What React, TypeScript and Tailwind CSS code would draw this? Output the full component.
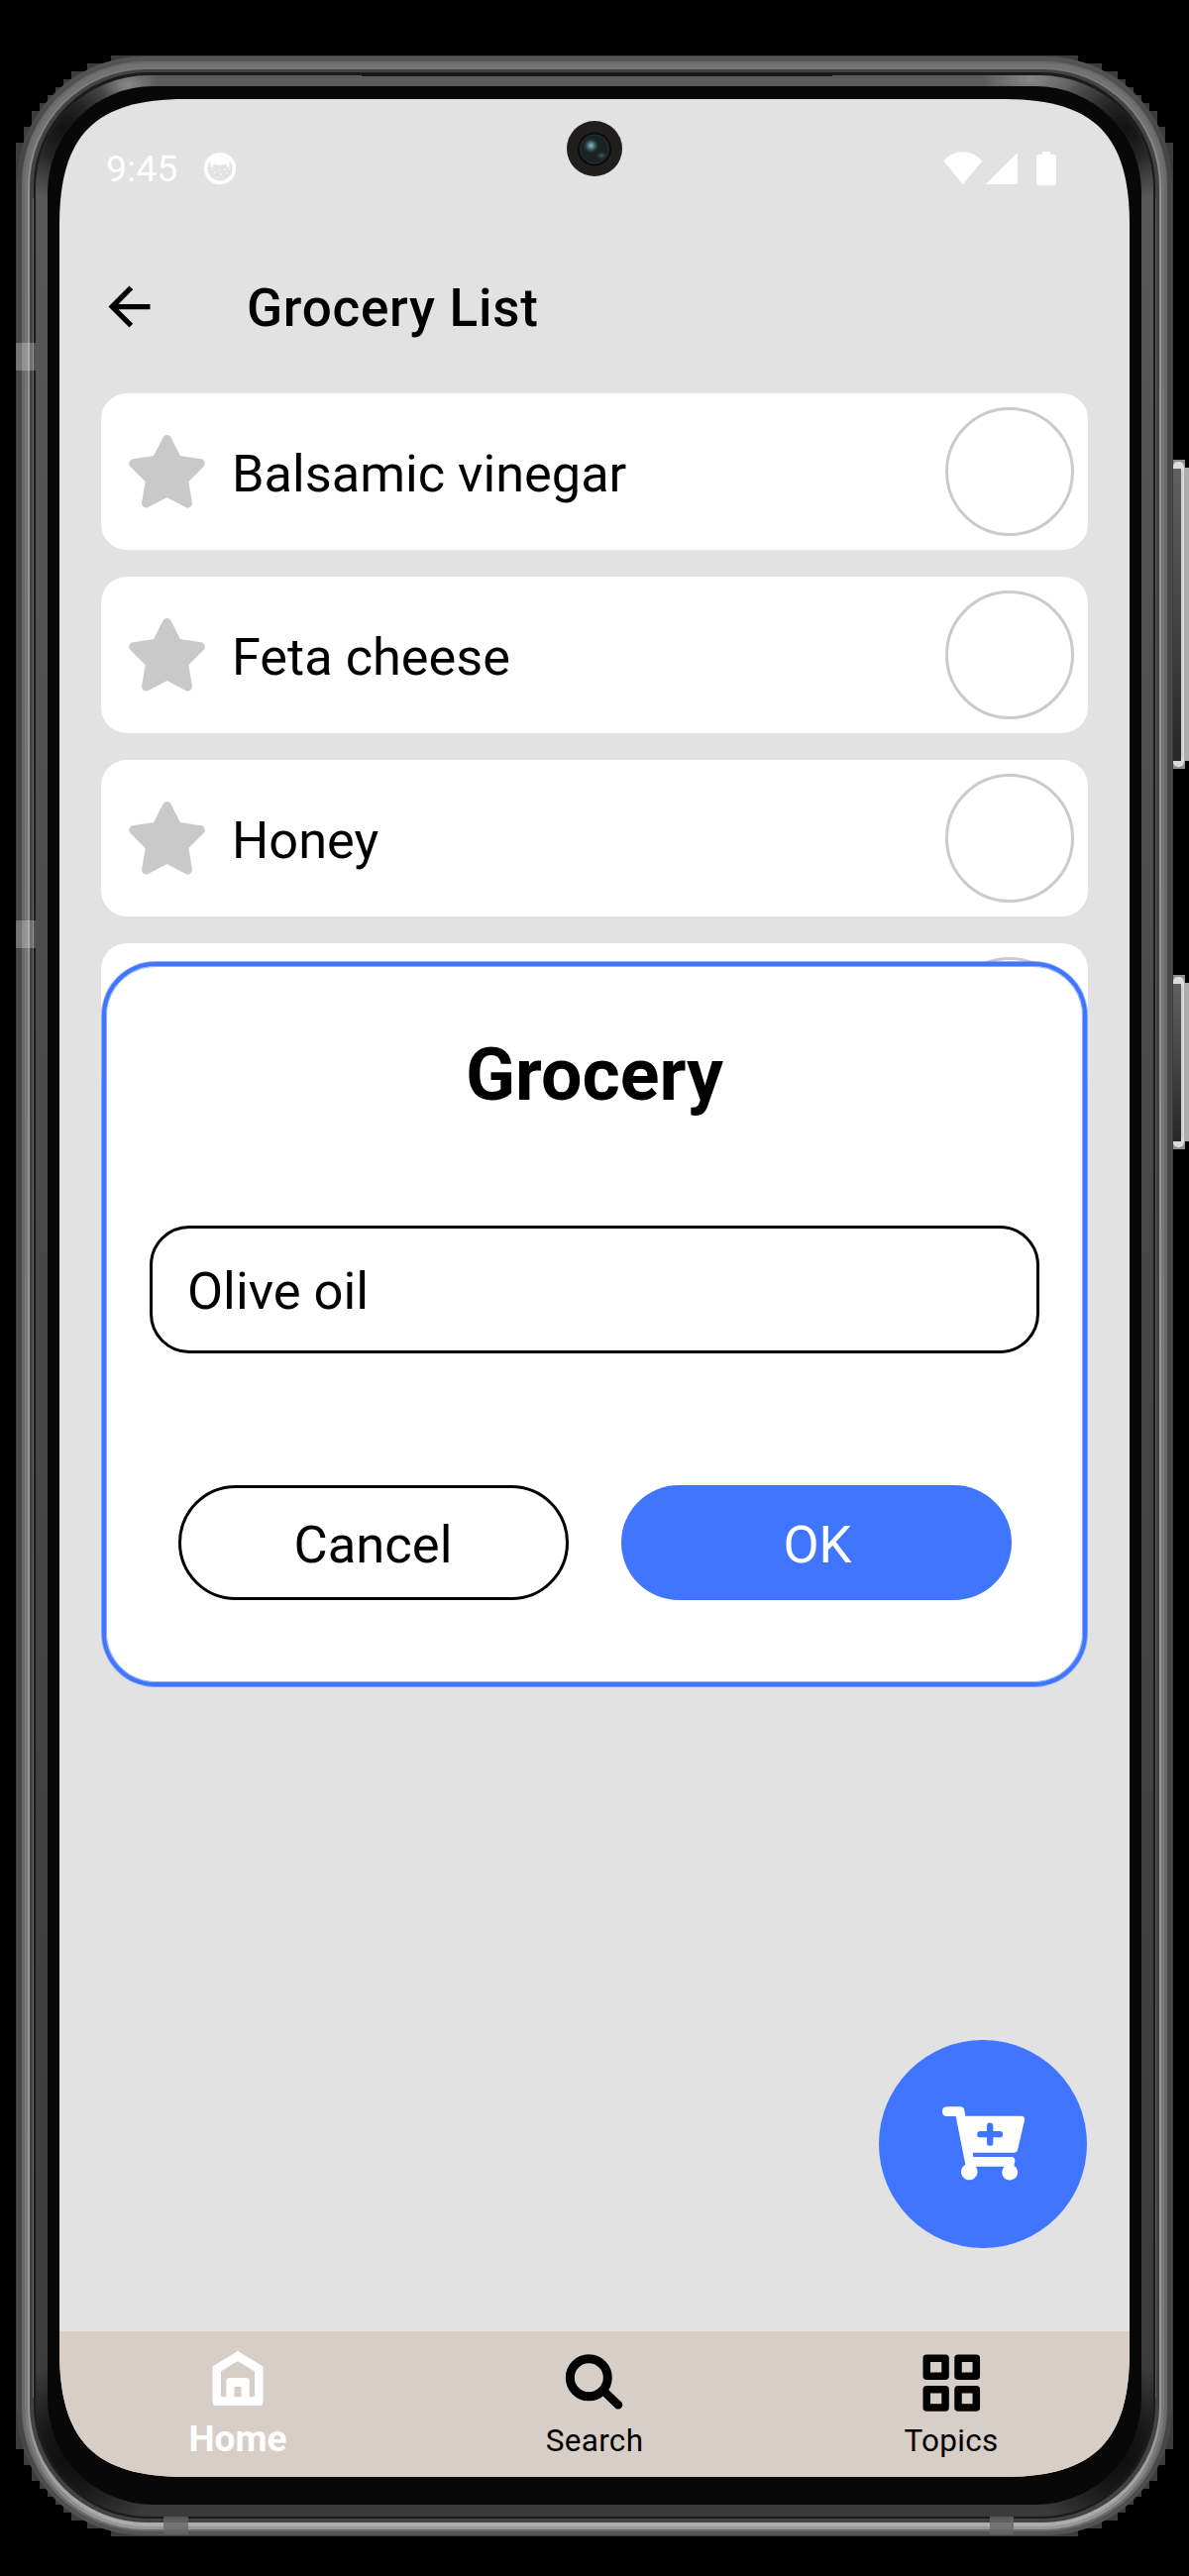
import React from "react";
import { MdArrowBack } from "react-icons/md";

const groceries = ["Balsamic vinegar", "Feta cheese", "Honey", "Lemon"];

type Ring = { x: number; top: number; bottom: number; r: number; fill: string };

const outerRings: Ring[] = [
  { x: 17, top: 57, bottom: 2559, r: 128, fill: "url(#rim)" },
  { x: 22, top: 62, bottom: 2555, r: 124, fill: "#6a6a6a" },
  { x: 25, top: 64, bottom: 2553, r: 122, fill: "url(#shine)" },
  { x: 28, top: 68, bottom: 2550, r: 120, fill: "url(#shineHot)" },
  { x: 30, top: 70, bottom: 2546, r: 118, fill: "#424242" },
  { x: 34, top: 73, bottom: 2542, r: 115, fill: "#1b1b1b" },
];

function RingRect({ x, top, bottom, r, fill }: Ring) {
  return <rect x={x} y={top} width={1200 - 2 * x} height={bottom - top} rx={r} fill={fill} />;
}

function SideButton({ y, h }: { y: number; h: number }) {
  return (
    <g>
      <rect x="1184" y={y} width="12" height={h} fill="#8f8f8f" />
      <rect x="1195" y={y + 8} width="5" height={h - 16} fill="#adadad" />
      <rect x="1184" y={y + 2} width="11" height={h - 4} rx="5" fill="#dcdcdc" />
      <rect x="1184" y={y + 9} width="8" height={h - 17} fill="url(#button)" />
      <rect x="1192" y={y + 12} width="2" height={h - 24} fill="#cfcfcf" />
    </g>
  );
}

function DeviceFrame() {
  return (
    <svg className="absolute inset-0" width="1200" height="2600" viewBox="0 0 1200 2600" aria-hidden="true">
      <defs>
        <linearGradient id="rim" x1="0" y1="0" x2="0" y2="1">
          <stop offset="0" stopColor="#555" />
          <stop offset="0.04" stopColor="#464646" />
          <stop offset="0.96" stopColor="#464646" />
          <stop offset="1" stopColor="#545454" />
        </linearGradient>
        <linearGradient id="shine" x1="0" y1="0" x2="0" y2="1">
          <stop offset="0" stopColor="#727272" />
          <stop offset="0.97" stopColor="#7a7a7a" />
          <stop offset="1" stopColor="#999" />
        </linearGradient>
        <linearGradient id="shineHot" x1="0" y1="0" x2="0" y2="1">
          <stop offset="0" stopColor="#777" />
          <stop offset="0.05" stopColor="#919191" />
          <stop offset="0.96" stopColor="#959595" />
          <stop offset="1" stopColor="#adadad" />
        </linearGradient>
        <linearGradient id="bezel" x1="0" y1="0" x2="0" y2="1">
          <stop offset="0" stopColor="#5a5a5a" />
          <stop offset="0.5" stopColor="#474747" />
          <stop offset="1" stopColor="#3a3a3a" />
        </linearGradient>
        <linearGradient id="button" x1="0" y1="0" x2="0" y2="1">
          <stop offset="0" stopColor="#606060" />
          <stop offset="1" stopColor="#272727" />
        </linearGradient>
        <radialGradient id="shade">
          <stop offset="0" stopColor="#000" stopOpacity="0.8" />
          <stop offset="0.4" stopColor="#000" stopOpacity="0.6" />
          <stop offset="1" stopColor="#000" stopOpacity="0" />
        </radialGradient>
        <radialGradient id="glow">
          <stop offset="0" stopColor="#fff" stopOpacity="0.28" />
          <stop offset="1" stopColor="#fff" stopOpacity="0" />
        </radialGradient>
        <clipPath id="bezelClip">
          <rect x="36" y="76" width="1128" height="2464" rx="114" />
        </clipPath>
      </defs>
      <path
        d="M112 56H1088V64H1112V72H1128V80H1136V88H1144V96H1152V104H1160V112H1168V128H1176V144H1184V2472H1176V2488H1168V2504H1160V2512H1152V2520H1144V2528H1136V2536H1128V2544H1112V2552H1088V2560H112V2552H88V2544H72V2536H64V2528H56V2520H48V2512H40V2504H32V2488H24V2472H16V144H24V128H32V112H40V104H48V96H56V88H64V80H72V72H88V64H112Z"
        fill="#3c3c3c"
      />
      {outerRings.map((ring) => (
        <RingRect key={ring.x} {...ring} />
      ))}
      <rect x="33" y="200" width="1" height="2220" fill="#696969" />
      <rect x="1166" y="200" width="1" height="2220" fill="#5a5a5a" />
      <g clipPath="url(#bezelClip)">
        <rect x="36" y="76" width="1128" height="2464" fill="url(#bezel)" />
        <circle cx="64" cy="130" r="72" fill="url(#shade)" />
        <circle cx="1136" cy="130" r="72" fill="url(#shade)" />
        <circle cx="75" cy="2475" r="90" fill="url(#shade)" />
        <circle cx="1125" cy="2475" r="90" fill="url(#shade)" />
        <ellipse cx="130" cy="86" rx="30" ry="20" fill="url(#glow)" />
        <ellipse cx="1040" cy="80" rx="50" ry="20" fill="url(#glow)" />
      </g>
      <rect x="365" y="74" width="475" height="3" fill="#171717" />
      <rect x="48" y="87" width="1104" height="2441" rx="107" fill="#080808" />
      <rect x="16" y="346" width="20" height="28" fill="#fff" opacity="0.25" />
      <rect x="16" y="929" width="20" height="28" fill="#fff" opacity="0.25" />
      <rect x="165" y="2540" width="25" height="18" fill="#666" opacity="0.8" />
      <rect x="999" y="2540" width="24" height="18" fill="#666" opacity="0.8" />
      <SideButton y={464} h={312} />
      <SideButton y={984} h={176} />
    </svg>
  );
}

function Camera() {
  return (
    <svg className="absolute left-[512px] top-[22px] size-14" viewBox="0 0 56 56" aria-hidden="true">
      <defs>
        <radialGradient id="spotBlue">
          <stop offset="0" stopColor="#8fc0d2" />
          <stop offset="0.4" stopColor="#5d8796" stopOpacity="0.8" />
          <stop offset="1" stopColor="#26393e" stopOpacity="0" />
        </radialGradient>
        <radialGradient id="spotGreen">
          <stop offset="0" stopColor="#3c6a5e" />
          <stop offset="1" stopColor="#1d2b28" stopOpacity="0" />
        </radialGradient>
      </defs>
      <circle cx="28" cy="28" r="28" fill="#211f1e" />
      <circle cx="28" cy="28.500" r="17" fill="#0b0c0c" />
      <circle cx="28" cy="28.500" r="14.500" fill="#1a2323" stroke="#2b3334" strokeWidth="1" />
      <circle cx="24.500" cy="25" r="8" fill="url(#spotBlue)" />
      <ellipse cx="35" cy="35" rx="6" ry="5" fill="url(#spotGreen)" />
    </svg>
  );
}

function StatusBar() {
  return (
    <div className="flex h-[139px] items-center justify-between pl-[47px] pr-[73px] text-white">
      <div className="flex items-center gap-[26px]">
        <span className="text-[37.500px] leading-[44px]">9:45</span>
        <svg className="size-[34px]" viewBox="0 0 34 34" aria-hidden="true">
          <circle cx="17" cy="17" r="14.300" fill="none" stroke="#fff" strokeWidth="3.600" />
          <path d="M5 8Q10 2 17 2t12 6l-2.500 3v4.500L24.500 16L23 12.500L21 13.500H13L11 12.500L9.500 16L7.500 15.500V11Z" fill="#fff" />
          <g fill="#fff" opacity="0.75">
            <circle cx="9" cy="18" r="0.900" />
            <circle cx="12" cy="21.500" r="0.900" />
            <circle cx="16" cy="19" r="0.800" />
            <circle cx="18" cy="23" r="0.900" />
            <circle cx="22" cy="18" r="0.900" />
            <circle cx="24" cy="22" r="0.800" />
            <circle cx="14" cy="26" r="0.800" />
            <circle cx="20" cy="27" r="0.800" />
            <circle cx="26" cy="17" r="0.800" />
          </g>
        </svg>
      </div>
      <svg className="h-[34px] w-[115px]" viewBox="0 0 115 34" fill="#fff" aria-hidden="true">
        <path d="M0.300 9.500C11-2.700 28.700-2.700 39.300 9.500L19.700 33Z" />
        <path d="M42.500 33L75 1V33Z" />
        <path d="M100 0h8v3h4a2 2 0 0 1 2 2v27a2 2 0 0 1-2 2H96a2 2 0 0 1-2-2V5a2 2 0 0 1 2-2h4Z" />
      </svg>
    </div>
  );
}

function Star() {
  return (
    <svg className="h-[74px] w-[77px]" viewBox="0 0 77 74" aria-hidden="true">
      <path
        d="M38.500 4.500L49 25.200L72.300 28.800L55.500 45.500L59.500 69L38.500 58L17.500 69L21.500 45.500L4.700 28.800L28 25.200Z"
        fill="#c9c9c9"
        stroke="#c9c9c9"
        strokeWidth="9"
        strokeLinejoin="round"
      />
    </svg>
  );
}

function GroceryRow({ name }: { name: string }) {
  return (
    <li className="flex h-[158px] shrink-0 items-center rounded-[26px] bg-white pl-7 pr-[14px]">
      <Star />
      <span className="ml-[27px] flex-1 pt-[3px] text-[52.300px] leading-[62px]">{name}</span>
      <span className="size-[130px] rounded-full border-[3px] border-[#cbcbcb]" />
    </li>
  );
}

function GroceryDialog() {
  return (
    <div
      role="dialog"
      className="absolute left-[43px] top-[871px] flex h-[731px] w-[994px] flex-col rounded-[54px] border-4 border-[#4076ff] bg-white px-11 pt-[67px] shadow-[0_0_0_1px_#4076ff99,inset_0_0_0_1px_#4076ff99]"
    >
      <h2 className="text-center text-[73.500px] font-bold leading-[86px]">Grocery</h2>
      <div className="mt-[109px] flex h-[129px] items-center rounded-[40px] border-[3px] border-black px-[35px] pt-[2px] text-[52.500px] leading-[62px]">
        Olive oil
      </div>
      <div className="mt-[133px] flex justify-center gap-[53px]">
        <button className="h-[116px] w-[394px] rounded-full border-[3px] border-black pt-[3px] text-[52.500px] leading-[62px]">
          Cancel
        </button>
        <button className="h-[116px] w-[394px] rounded-full bg-[#4076ff] pt-[3px] pl-[3px] text-[52.500px] leading-[62px] text-white">
          OK
        </button>
      </div>
    </div>
  );
}

function AddButton() {
  return (
    <button
      aria-label="Add grocery"
      className="absolute left-[827px] top-[1959px] size-[210px] rounded-full bg-[#4076ff]"
    >
      <svg className="size-[210px]" viewBox="81 87 630 630" aria-hidden="true">
        <path
          d="M287 289H328Q338 289 340 300L343 317H512Q524 318 522 330L501 420Q499 428 490 428H365L367 441H484Q493 442 493 453L490 467A24 24 0 1 1 461 470H374A25 25 0 1 1 343 464L314 318H287Q273 317 273 303.500T287 289Z"
          fill="#fff"
        />
        <path d="M417.500 347V398M388 372.500H447" stroke="#4076ff" strokeWidth="19" strokeLinecap="round" />
      </svg>
    </button>
  );
}

function HomeIcon() {
  return (
    <svg className="h-[56px] w-[52px]" viewBox="0 0 52 56" aria-hidden="true">
      <path
        fillRule="evenodd"
        fill="#fff"
        d="M26 0L51.500 15.500V52a3 3 0 0 1-3 3H3.500a3 3 0 0 1-3-3V15.500ZM26 10L9 20.500V46H14.300V30.500a3.500 3.500 0 0 1 3.500-3.500H34.300a3.500 3.500 0 0 1 3.500 3.500V46H43V20.500ZM22.500 36V46H29.500V36Z"
      />
    </svg>
  );
}

function SearchIcon() {
  return (
    <svg className="h-[56px] w-[60px]" viewBox="0 0 60 56" fill="none" stroke="#000" aria-hidden="true">
      <circle cx="24.300" cy="23.800" r="19" strokeWidth="9" />
      <path d="M40 38L54 51.300" strokeWidth="8.500" strokeLinecap="round" />
    </svg>
  );
}

function TopicsIcon() {
  return (
    <svg className="h-[59px] w-[59px]" viewBox="0 0 59 59" fill="none" stroke="#000" strokeWidth="7.500" aria-hidden="true">
      <path strokeLinejoin="round" d="M4.250 4.250h18.800v18h-18.800ZM36 4.250h18.300v18H36ZM4.250 35.750h18.800v18.300h-18.800ZM36 35.750h18.300v18.300H36Z" />
    </svg>
  );
}

function BottomNav() {
  return (
    <nav className="grid h-[147px] shrink-0 grid-cols-3 bg-[#d8cec8]">
      <div className="flex flex-col items-center pt-5 text-white">
        <HomeIcon />
        <span className="mt-[11px] text-[37px] font-bold leading-[44px]">Home</span>
      </div>
      <div className="flex flex-col items-center pt-[23px]">
        <SearchIcon />
        <span className="mt-[13px] text-[31.500px] leading-[38px] tracking-[0.300px]">Search</span>
      </div>
      <div className="flex flex-col items-center pt-[23px]">
        <TopicsIcon />
        <span className="mt-[10px] text-[31.500px] leading-[38px] tracking-[0.300px]">Topics</span>
      </div>
    </nav>
  );
}

export default function App() {
  return (
    <div className="relative h-[2600px] w-[1200px] overflow-hidden bg-black px-[60px] pt-[100px] font-['Roboto',sans-serif] text-black">
      <DeviceFrame />
      <main className="relative flex h-[2400px] flex-col overflow-hidden bg-[#e2e2e2] [clip-path:path('M0_127C0_36_36_0_127_0H953C1044_0_1080_36_1080_127V2273C1080_2364_1044_2400_953_2400H127C36_2400_0_2364_0_2273Z')]">
        <StatusBar />
        <header className="mt-[38px] flex h-[64px] items-center pl-[39px]">
          <MdArrowBack className="size-[63px]" />
          <h1 className="ml-[87px] pt-[3px] text-[53px] font-medium leading-[62px] tracking-[0.750px]">Grocery List</h1>
        </header>
        <ul className="mx-[42px] mt-[56px] flex flex-1 flex-col gap-[27px]">
          {groceries.map((name) => (
            <GroceryRow key={name} name={name} />
          ))}
        </ul>
        <BottomNav />
        <Camera />
        <GroceryDialog />
        <AddButton />
      </main>
    </div>
  );
}
